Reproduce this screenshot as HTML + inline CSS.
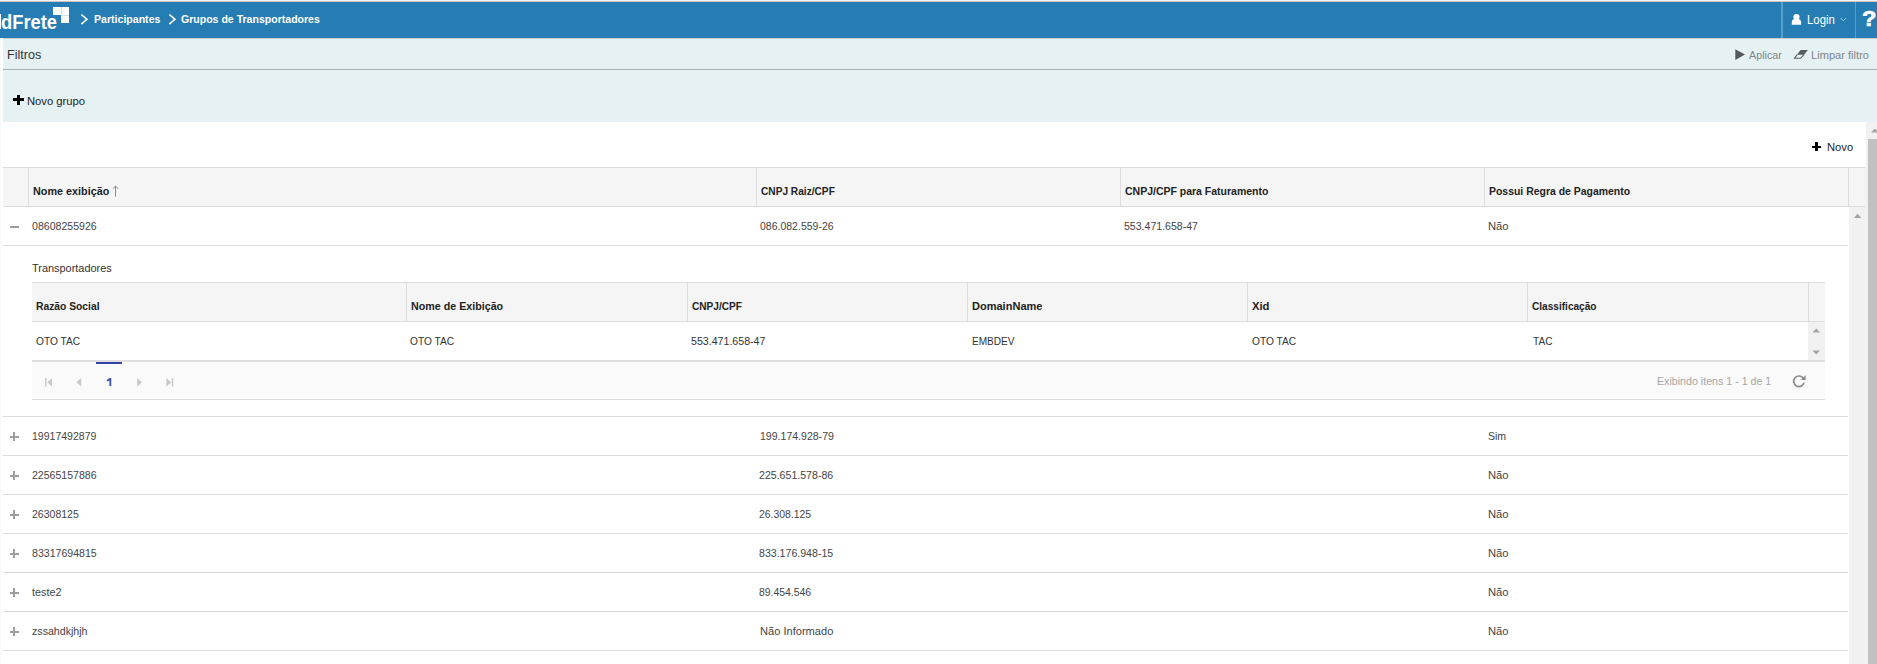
<!DOCTYPE html>
<html>
<head>
<meta charset="utf-8">
<title>Grupos de Transportadores</title>
<style>
html,body{margin:0;padding:0;}
body{width:1877px;height:664px;position:relative;overflow:hidden;background:#fff;font-family:"Liberation Sans",sans-serif;font-size:11px;color:#333;}
.a{position:absolute;}
.t{position:absolute;white-space:nowrap;line-height:20px;height:20px;transform-origin:0 0;}
.b{font-weight:bold;}
.hl{position:absolute;height:1px;background:#dcdcdc;}
.vl{position:absolute;width:1px;background:#dcdcdc;}
</style>
</head>
<body>
<!-- top strip -->
<div class="a" style="left:0;top:0;width:1877px;height:1px;background:#f7f6f6;"></div>
<div class="a" style="left:0;top:1px;width:1877px;height:1px;background:#cdc5c5;"></div>
<!-- header -->
<div class="a" style="left:0;top:2px;width:1877px;height:36px;background:#267db3;"></div>
<!-- logo -->
<div class="a" style="left:0;top:14px;width:1.2px;height:15px;background:#fff;"></div>
<div class="a" style="left:53px;top:7px;width:16px;height:8px;background:#fff;"></div>
<div class="a" style="left:61px;top:15px;width:8px;height:8px;background:#fff;"></div>
<div class="a" style="left:60.5px;top:7px;width:1px;height:8px;background:#cfe2ee;"></div>
<div class="a" style="left:61px;top:15px;width:8px;height:1px;background:#cfe2ee;"></div>
<!-- breadcrumbs -->
<svg class="a" style="left:78px;top:12px;" width="12" height="14" viewBox="0 0 12 14"><path d="M3.3 2.5 L8.9 7.3 L3.3 12.1" fill="none" stroke="#fff" stroke-width="1.6"/></svg>
<svg class="a" style="left:166px;top:12px;" width="12" height="14" viewBox="0 0 12 14"><path d="M3.3 2.5 L8.9 7.3 L3.3 12.1" fill="none" stroke="#fff" stroke-width="1.6"/></svg>
<!-- login -->
<div class="a" style="left:1781.2px;top:2px;height:36px;width:1.7px;background:#5c9dc7;"></div>
<div class="vl" style="left:1855px;top:2px;height:36px;background:#5c9dc7;"></div>
<svg class="a" style="left:1791px;top:14px;" width="11" height="12" viewBox="0 0 11 12"><circle cx="5.45" cy="3.1" r="3.1" fill="#fff"/><path d="M0.8 10.7 L0.8 8.2 Q0.8 5.5 3.2 5 L7.7 5 Q10.1 5.5 10.1 8.2 L10.1 10.7 Z" fill="#fff"/></svg>
<svg class="a" style="left:1839px;top:17px;" width="9" height="6" viewBox="0 0 9 6"><path d="M1.5 1 L4.3 3.8 L7.1 1" fill="none" stroke="#b9d3e6" stroke-width="0.9"/></svg>

<div class="a" style="left:0;top:38px;width:1px;height:626px;background:#f9f9f7;"></div>
<!-- filter panel -->
<div class="a" style="left:3px;top:38px;width:1874px;height:1px;background:#c9cfd1;z-index:1;"></div>
<div class="a" style="left:3px;top:38px;width:1874px;height:84px;background:#e6f1f4;"></div>
<div class="a" style="left:3px;top:69px;width:1874px;height:1px;background:#a8adaf;"></div>
<svg class="a" style="left:1735px;top:49px;" width="11" height="12" viewBox="0 0 11 12"><path d="M0.3 0.2 L10 5.6 L0.3 11 Z" fill="#55595c"/></svg>
<svg class="a" style="left:1793px;top:49px;" width="16" height="11" viewBox="0 0 16 11"><path d="M7.6 1.1 L14.8 1.1 L11.2 5.7 L4 5.7 Z" fill="#585d60"/><path d="M4.2 5.7 L1.5 9.3 L7.7 9.3 L10.9 5.7" fill="none" stroke="#585d60" stroke-width="1.1"/></svg>
<!-- plus novo grupo -->
<div class="a" style="left:13px;top:98.4px;width:10.5px;height:2.7px;background:#000;"></div>
<div class="a" style="left:17px;top:95px;width:2.8px;height:10px;background:#000;"></div>

<!-- outer scrollbar -->
<div class="a" style="left:1866px;top:122px;width:11px;height:542px;background:#f1f1f1;"></div>
<div class="a" style="left:1865px;top:167px;width:1px;height:497px;background:#f1f1f1;"></div>
<div class="a" style="left:1868.2px;top:139px;width:9px;height:525px;background:#c1c1c1;"></div>
<svg class="a" style="left:1870px;top:128px;" width="8" height="6" viewBox="0 0 8 6"><path d="M1 4.5 L5 0.7 L9 4.5 Z" fill="#a3a3a3"/></svg>

<!-- Novo plus -->
<div class="a" style="left:1812.3px;top:145.5px;width:8.8px;height:2.4px;background:#000;"></div>
<div class="a" style="left:1815.3px;top:142.3px;width:2.8px;height:8.7px;background:#000;"></div>

<!-- main grid header -->
<div class="a" style="left:3px;top:167px;width:1862px;height:40px;background:#f5f5f5;"></div>
<div class="hl" style="left:3px;top:167px;width:1862px;"></div>
<div class="hl" style="left:3px;top:206px;width:1862px;"></div>
<div class="vl" style="left:28px;top:168px;height:38px;"></div>
<div class="vl" style="left:756px;top:168px;height:38px;"></div>
<div class="vl" style="left:1120px;top:168px;height:38px;"></div>
<div class="vl" style="left:1484px;top:168px;height:38px;"></div>
<div class="vl" style="left:1848px;top:168px;height:38px;"></div>
<svg class="a" style="left:112px;top:185px;" width="7" height="13" viewBox="0 0 7 13"><path d="M3.5 1 L3.5 11.6 M0.9 3.7 L3.5 1.1 L6.1 3.7" fill="none" stroke="#8a8a8a" stroke-width="1"/></svg>

<!-- inner scrollbar of main grid -->
<div class="a" style="left:1848.5px;top:207px;width:16.5px;height:457px;background:#f1f1f1;"></div>
<svg class="a" style="left:1853px;top:213px;" width="9" height="6" viewBox="0 0 9 6"><path d="M1 5 L4.6 0.7 L8.2 5 Z" fill="#a3a3a3"/></svg>

<!-- row 1 -->
<div class="a" style="left:10px;top:225.5px;width:8.7px;height:2.3px;background:#9c9c9c;"></div>
<div class="hl" style="left:3px;top:245px;width:1845px;"></div>

<!-- detail -->
<div class="a" style="left:32px;top:282px;width:1793px;height:39px;background:#f5f5f5;"></div>
<div class="hl" style="left:32px;top:282px;width:1793px;"></div>
<div class="hl" style="left:32px;top:321px;width:1793px;"></div>
<div class="vl" style="left:406px;top:283px;height:38px;"></div>
<div class="vl" style="left:687px;top:283px;height:38px;"></div>
<div class="vl" style="left:967px;top:283px;height:38px;"></div>
<div class="vl" style="left:1247px;top:283px;height:38px;"></div>
<div class="vl" style="left:1527px;top:283px;height:38px;"></div>
<div class="vl" style="left:1808px;top:283px;height:38px;"></div>
<div class="a" style="left:1808.2px;top:322px;width:16.8px;height:38px;background:#f1f1f1;"></div>
<svg class="a" style="left:1812.3px;top:328.4px;" width="9" height="6" viewBox="0 0 9 6"><path d="M0.5 4.5 L4.2 0.5 L8 4.5 Z" fill="#a3a3a3"/></svg>
<svg class="a" style="left:1812.3px;top:349.6px;" width="9" height="6" viewBox="0 0 9 6"><path d="M0.5 0.5 L4.2 4.5 L8 0.5 Z" fill="#a3a3a3"/></svg>
<!-- pager -->
<div class="a" style="left:32px;top:360px;width:1793px;height:39px;background:#fafafa;"></div>
<div class="a" style="left:32px;top:360px;width:1793px;height:2px;background:#dedede;"></div>
<div class="hl" style="left:32px;top:399px;width:1793px;"></div>
<div class="a" style="left:96px;top:362px;width:26px;height:2px;background:#3343a6;"></div>
<svg class="a" style="left:105px;top:377px;" width="8" height="10" viewBox="0 0 8 10"><path d="M4.5 1 L6.25 1 L6.25 9 L4.4 9 L4.4 3.6 L2 4.6 L1.6 3.1 Z" fill="#3f51b5"/></svg>
<svg class="a" style="left:44px;top:377px;" width="10" height="10" viewBox="0 0 10 10"><path d="M1.8 1 L1.8 9.5" stroke="#c9c9c9" stroke-width="1.5"/><path d="M8 1 L3.2 5.25 L8 9.5 Z" fill="#c9c9c9"/></svg>
<svg class="a" style="left:74px;top:377px;" width="10" height="10" viewBox="0 0 10 10"><path d="M7.2 1 L2.4 5.25 L7.2 9.5 Z" fill="#c9c9c9"/></svg>
<svg class="a" style="left:135px;top:377px;" width="10" height="10" viewBox="0 0 10 10"><path d="M2.2 1 L7 5.25 L2.2 9.5 Z" fill="#c9c9c9"/></svg>
<svg class="a" style="left:164px;top:377px;" width="10" height="10" viewBox="0 0 10 10"><path d="M8.5 1 L8.5 9.5" stroke="#c9c9c9" stroke-width="1.5"/><path d="M2.4 1 L7.2 5.25 L2.4 9.5 Z" fill="#c9c9c9"/></svg>
<svg class="a" style="left:1791px;top:373px;" width="16" height="16" viewBox="0 0 16 16"><path d="M12.4 5.4 A5.3 5.3 0 1 0 13.1 9.6" fill="none" stroke="#8a8a8a" stroke-width="1.7"/><path d="M14.6 2 L14.6 7 L9.6 7 Z" fill="#8a8a8a"/></svg>

<div class="hl" style="left:3px;top:416px;width:1845px;"></div>
<div class="hl" style="left:3px;top:455px;width:1845px;"></div>
<div class="hl" style="left:3px;top:494px;width:1845px;"></div>
<div class="hl" style="left:3px;top:533px;width:1845px;"></div>
<div class="hl" style="left:3px;top:572px;width:1845px;"></div>
<div class="hl" style="left:3px;top:611px;width:1845px;"></div>
<div class="hl" style="left:3px;top:650px;width:1845px;"></div>

<div class="a" style="left:10px;top:435.60px;width:8.7px;height:2.2px;background:#9e9e9e;"></div>
<div class="a" style="left:13.2px;top:432.40px;width:2.2px;height:8.6px;background:#9e9e9e;"></div>
<div class="a" style="left:10px;top:474.60px;width:8.7px;height:2.2px;background:#9e9e9e;"></div>
<div class="a" style="left:13.2px;top:471.40px;width:2.2px;height:8.6px;background:#9e9e9e;"></div>
<div class="a" style="left:10px;top:513.60px;width:8.7px;height:2.2px;background:#9e9e9e;"></div>
<div class="a" style="left:13.2px;top:510.40px;width:2.2px;height:8.6px;background:#9e9e9e;"></div>
<div class="a" style="left:10px;top:552.60px;width:8.7px;height:2.2px;background:#9e9e9e;"></div>
<div class="a" style="left:13.2px;top:549.40px;width:2.2px;height:8.6px;background:#9e9e9e;"></div>
<div class="a" style="left:10px;top:591.60px;width:8.7px;height:2.2px;background:#9e9e9e;"></div>
<div class="a" style="left:13.2px;top:588.40px;width:2.2px;height:8.6px;background:#9e9e9e;"></div>
<div class="a" style="left:10px;top:630.60px;width:8.7px;height:2.2px;background:#9e9e9e;"></div>
<div class="a" style="left:13.2px;top:627.40px;width:2.2px;height:8.6px;background:#9e9e9e;"></div>
<div class="t b" id="logo" style="left:0.50px;top:12px;font-size:20.5px;color:#fff;transform:scaleX(0.8940);">dFrete</div>
<div class="t b" id="help" style="-webkit-text-stroke:0.7px #fff;left:1861.50px;top:9px;font-size:22.5px;color:#fff;transform:scaleX(1.0465);">?</div>
<div class="t b" id="bc1" style="left:93.50px;top:9px;font-size:11.5px;color:#fff;transform:scaleX(0.9194);">Participantes</div>
<div class="t b" id="bc2" style="left:180.50px;top:9px;font-size:11.5px;color:#fff;transform:scaleX(0.9167);">Grupos de Transportadores</div>
<div class="t" id="login" style="left:1806.50px;top:10px;font-size:12px;color:#fff;transform:scaleX(0.9512);">Login</div>
<div class="t" id="filtros" style="left:6.50px;top:45px;font-size:13px;color:#333;transform:scaleX(0.9657);">Filtros</div>
<div class="t" id="aplicar" style="left:1748.50px;top:45px;font-size:11.5px;color:#7f8487;transform:scaleX(0.9344);">Aplicar</div>
<div class="t" id="limpar" style="left:1810.50px;top:45px;font-size:11.5px;color:#7f8487;transform:scaleX(0.9659);">Limpar filtro</div>
<div class="t" id="novogrupo" style="left:26.50px;top:91px;font-size:11.5px;color:#222;transform:scaleX(0.9768);">Novo grupo</div>
<div class="t" id="novo" style="left:1826.50px;top:137px;font-size:11.5px;color:#222;transform:scaleX(0.9723);">Novo</div>
<div class="t b" id="h1" style="left:32.50px;top:181px;font-size:11.5px;color:#222;transform:scaleX(0.9404);">Nome exibição</div>
<div class="t b" id="h2" style="left:760.50px;top:181px;font-size:11.5px;color:#222;transform:scaleX(0.8819);">CNPJ Raiz/CPF</div>
<div class="t b" id="h3" style="left:1124.50px;top:181px;font-size:11.5px;color:#222;transform:scaleX(0.9121);">CNPJ/CPF para Faturamento</div>
<div class="t b" id="h4" style="left:1488.50px;top:181px;font-size:11.5px;color:#222;transform:scaleX(0.9086);">Possui Regra de Pagamento</div>
<div class="t" id="r1c1" style="left:31.50px;top:216px;font-size:11.5px;color:#444;transform:scaleX(0.9202);">08608255926</div>
<div class="t" id="r1c2" style="left:759.50px;top:216px;font-size:11.5px;color:#444;transform:scaleX(0.9132);">086.082.559-26</div>
<div class="t" id="r1c3" style="left:1123.50px;top:216px;font-size:11.5px;color:#444;transform:scaleX(0.9177);">553.471.658-47</div>
<div class="t" id="r1c4" style="left:1487.50px;top:216px;font-size:11.5px;color:#444;transform:scaleX(0.9761);">Não</div>
<div class="t" id="transp" style="left:31.50px;top:258px;font-size:11.5px;color:#333;transform:scaleX(0.9505);">Transportadores</div>
<div class="t b" id="d1" style="left:35.50px;top:296px;font-size:11.5px;color:#222;transform:scaleX(0.8952);">Razão Social</div>
<div class="t b" id="d2" style="left:410.50px;top:296px;font-size:11.5px;color:#222;transform:scaleX(0.9302);">Nome de Exibição</div>
<div class="t b" id="d3" style="left:691.50px;top:296px;font-size:11.5px;color:#222;transform:scaleX(0.8786);">CNPJ/CPF</div>
<div class="t b" id="d4" style="left:971.50px;top:296px;font-size:11.5px;color:#222;transform:scaleX(0.9585);">DomainName</div>
<div class="t b" id="d5" style="left:1251.50px;top:296px;font-size:11.5px;color:#222;transform:scaleX(0.9758);">Xid</div>
<div class="t b" id="d6" style="left:1531.50px;top:296px;font-size:11.5px;color:#222;transform:scaleX(0.8770);">Classificação</div>
<div class="t" id="e1" style="left:35.50px;top:331px;font-size:11.5px;color:#333;transform:scaleX(0.8844);">OTO TAC</div>
<div class="t" id="e2" style="left:409.50px;top:331px;font-size:11.5px;color:#333;transform:scaleX(0.8844);">OTO TAC</div>
<div class="t" id="e3" style="left:690.50px;top:331px;font-size:11.5px;color:#333;transform:scaleX(0.9232);">553.471.658-47</div>
<div class="t" id="e4" style="left:971.50px;top:331px;font-size:11.5px;color:#333;transform:scaleX(0.8764);">EMBDEV</div>
<div class="t" id="e5" style="left:1251.50px;top:331px;font-size:11.5px;color:#333;transform:scaleX(0.8844);">OTO TAC</div>
<div class="t" id="e6" style="left:1532.50px;top:331px;font-size:11.5px;color:#333;transform:scaleX(0.8798);">TAC</div>
<div class="t" id="exib" style="left:1656.50px;top:371px;font-size:11.5px;color:#a6a6a6;transform:scaleX(0.9261);">Exibindo itens 1 - 1 de 1</div>
<div class="t" id="q0a" style="left:31.50px;top:426px;font-size:11.5px;color:#444;transform:scaleX(0.9145);">19917492879</div>
<div class="t" id="q0b" style="left:759.50px;top:426px;font-size:11.5px;color:#444;transform:scaleX(0.9167);">199.174.928-79</div>
<div class="t" id="q0c" style="left:1487.50px;top:426px;font-size:11.5px;color:#444;transform:scaleX(0.9117);">Sim</div>
<div class="t" id="q1a" style="left:31.50px;top:465px;font-size:11.5px;color:#444;transform:scaleX(0.9178);">22565157886</div>
<div class="t" id="q1b" style="left:758.50px;top:465px;font-size:11.5px;color:#444;transform:scaleX(0.9207);">225.651.578-86</div>
<div class="t" id="q1c" style="left:1487.50px;top:465px;font-size:11.5px;color:#444;transform:scaleX(0.9761);">Não</div>
<div class="t" id="q2a" style="left:31.50px;top:504px;font-size:11.5px;color:#444;transform:scaleX(0.9139);">26308125</div>
<div class="t" id="q2b" style="left:758.50px;top:504px;font-size:11.5px;color:#444;transform:scaleX(0.9063);">26.308.125</div>
<div class="t" id="q2c" style="left:1487.50px;top:504px;font-size:11.5px;color:#444;transform:scaleX(0.9761);">Não</div>
<div class="t" id="q3a" style="left:31.50px;top:543px;font-size:11.5px;color:#444;transform:scaleX(0.9191);">83317694815</div>
<div class="t" id="q3b" style="left:758.50px;top:543px;font-size:11.5px;color:#444;transform:scaleX(0.9209);">833.176.948-15</div>
<div class="t" id="q3c" style="left:1487.50px;top:543px;font-size:11.5px;color:#444;transform:scaleX(0.9761);">Não</div>
<div class="t" id="q4a" style="left:31.50px;top:582px;font-size:11.5px;color:#444;transform:scaleX(0.9443);">teste2</div>
<div class="t" id="q4b" style="left:758.50px;top:582px;font-size:11.5px;color:#444;transform:scaleX(0.9062);">89.454.546</div>
<div class="t" id="q4c" style="left:1487.50px;top:582px;font-size:11.5px;color:#444;transform:scaleX(0.9761);">Não</div>
<div class="t" id="q5a" style="left:31.50px;top:621px;font-size:11.5px;color:#444;transform:scaleX(0.9240);">zssahdkjhjh</div>
<div class="t" id="q5b" style="left:759.50px;top:621px;font-size:11.5px;color:#444;transform:scaleX(0.9643);">Não Informado</div>
<div class="t" id="q5c" style="left:1487.50px;top:621px;font-size:11.5px;color:#444;transform:scaleX(0.9761);">Não</div>
</body>
</html>
